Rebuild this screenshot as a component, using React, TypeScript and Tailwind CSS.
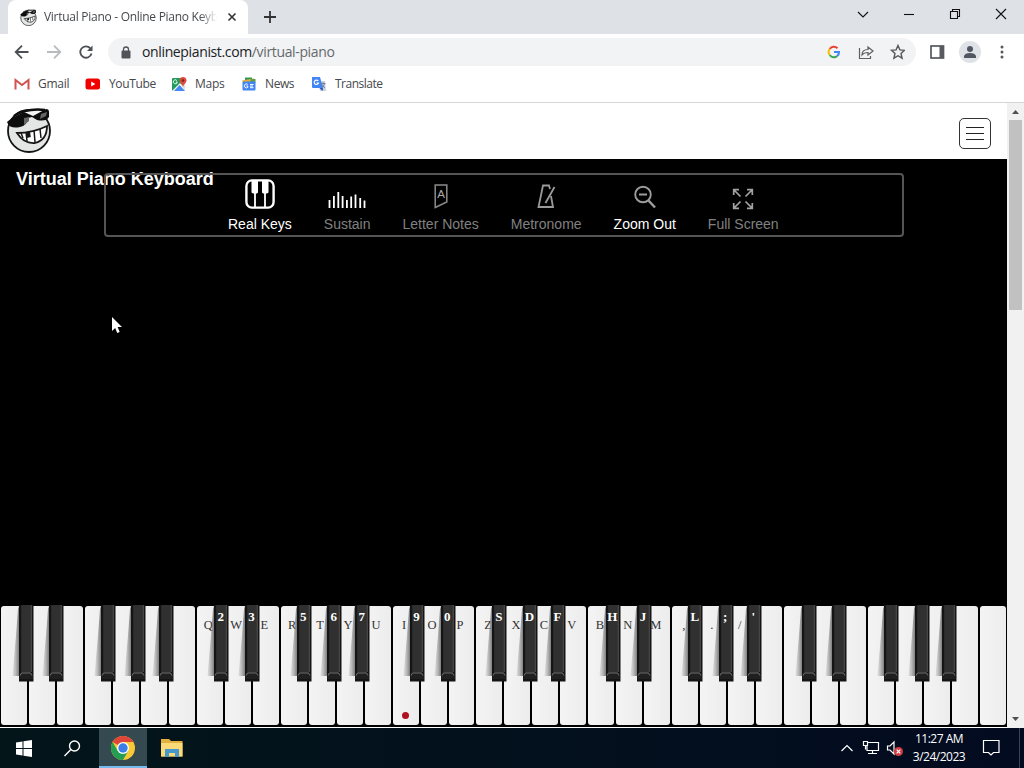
import type { ReactNode } from "react";

const bookmarks: { name: string; width: string; text: string; icon: ReactNode }[] = [
  {
    name: "Gmail",
    width: "w-[71px]",
    text: "tracking-[-0.25px]",
    icon: (
      <svg width="16" height="16" viewBox="0 0 16 16">
        <path d="M1.500 13.500V4L8 9l6.500-5v9.500" fill="none" stroke="#cf5350" strokeWidth="2" />
      </svg>
    ),
  },
  {
    name: "YouTube",
    width: "w-[86px]",
    text: "tracking-[-0.35px]",
    icon: (
      <svg width="16" height="16" viewBox="0 0 16 16">
        <rect x=".5" y="2.500" width="14.500" height="11" rx="2.500" fill="#f00000" />
        <path d="M6.200 5.500v5l4.200-2.500z" fill="#fff" />
      </svg>
    ),
  },
  {
    name: "Maps",
    width: "w-[70px]",
    text: "tracking-[-0.25px]",
    icon: (
      <svg width="16" height="16" viewBox="0 0 16 16">
        <rect x="1" y="2" width="13" height="13" rx="1" fill="#1f9b5b" />
        <path d="M1 15 9 7l5 5v3z" fill="#f4f4f4" />
        <path d="m3 15 5.500-6L14 15z" fill="#4688f4" />
        <path d="m10 9 4-3v8z" fill="#e0e0e0" />
        <path d="M5.800 4.500a2 2 0 1 0 .5 1.500H4.800" fill="none" stroke="#fff" strokeWidth=".9" />
        <path d="M12 1a3.600 3.600 0 0 1 3.500 3.500C15.500 7 13 7.500 12 11 11 7.500 8.500 7 8.500 4.500A3.600 3.600 0 0 1 12 1z" fill="#dd4b3e" />
        <circle cx="12" cy="4.500" r="1.300" fill="#7b231c" />
      </svg>
    ),
  },
  {
    name: "News",
    width: "w-[70px]",
    text: "tracking-[-0.4px]",
    icon: (
      <svg width="16" height="16" viewBox="0 0 16 16">
        <path d="M4 1.500h7v4H4z" fill="#319756" />
        <path d="m1 4.500 12-2 1 4H2z" fill="#e7ad32" />
        <path d="M10 3h4.500v4H9z" fill="#5a9b51" />
        <rect x="1.500" y="5.500" width="13" height="9" rx="1" fill="#4285f4" />
        <path d="M6.800 8.500a2 2 0 1 0 0 2.800V10H5.300M9 8.500h3.500M9 10.100h3M9 11.700h3.500" fill="none" stroke="#fff" />
      </svg>
    ),
  },
  {
    name: "Translate",
    width: "w-[80px]",
    text: "tracking-[-0.5px]",
    icon: (
      <svg width="16" height="16" viewBox="0 0 16 16">
        <path d="M7 5h7l1 10H9z" fill="#c9d1dd" />
        <path d="M1 1h8l3 11H2a1 1 0 0 1-1-1z" fill="#4285f4" />
        <path d="m8.500 12 3 3 .5-3z" fill="#2456b3" />
        <path d="M7.200 5A2.200 2.200 0 1 0 7.500 7H5.500" fill="none" stroke="#fff" strokeWidth="1.100" />
        <path d="M10 7.500h4.500M12.200 6.500v1M13.500 7.500c-.5 2-1.500 3-2.500 4M11 8.500c.5 1.500 1.500 2.500 3 3" fill="none" stroke="#667893" strokeWidth=".9" />
      </svg>
    ),
  },
];

const tools: { label: string; active: boolean; icon: ReactNode }[] = [
  {
    label: "Real Keys",
    active: true,
    icon: (
      <svg width="30" height="32" viewBox="0 0 30 32">
        <rect x="1.400" y="2.400" width="27.200" height="27.200" rx="5.500" fill="#000" stroke="#fff" strokeWidth="2.400" />
        <path d="M10 15v14M20 15v14" stroke="#fff" strokeWidth="1.800" />
        <path d="M6.500 3H13v11.500l-1 1H8l-1.500-1zM17 3h6.500v11.500l-1.500 1h-4l-1-1z" fill="#fff" />
      </svg>
    ),
  },
  {
    label: "Sustain",
    active: false,
    icon: (
      <svg width="38" height="32" viewBox="0 0 38 32">
        <path
          d="M1.500 22v8M5.900 18v12M10.300 14v16M14.600 18v12M18.900 22v8M23.200 18.500v11.500M27.500 16.500v13.500M32.200 20v10M36.500 22.500v7.500"
          stroke="#fff"
          strokeWidth="1.800"
        />
      </svg>
    ),
  },
  {
    label: "Letter Notes",
    active: false,
    icon: (
      <svg width="14" height="32" viewBox="0 0 14 32">
        <path d="M1.200 7h11.600v17L1.200 29.500z" fill="none" stroke="#8a8a8a" strokeWidth="1.500" />
        <text x="7" y="19.500" textAnchor="middle" fontSize="11.500" fill="#aaa" className="font-['Liberation_Sans',sans-serif]">
          A
        </text>
      </svg>
    ),
  },
  {
    label: "Metronome",
    active: false,
    icon: (
      <svg width="20" height="32" viewBox="0 0 20 32" fill="none" stroke="#9a9a9a" strokeWidth="1.800">
        <path d="M14 11 13 7.500H7L2.500 29h14.500l-2-11" />
        <path d="m9.500 25 9-16" />
      </svg>
    ),
  },
  {
    label: "Zoom Out",
    active: true,
    icon: (
      <svg width="22" height="32" viewBox="0 0 22 32" fill="none" stroke="#9c9c9c">
        <circle cx="9" cy="16.500" r="7.800" strokeWidth="1.900" />
        <path d="M5 16.500h8" strokeWidth="2" />
        <path d="m14.500 22.500 6.500 7" strokeWidth="2.500" />
      </svg>
    ),
  },
  {
    label: "Full Screen",
    active: false,
    icon: (
      <svg width="22" height="32" viewBox="0 0 22 32" fill="none" stroke="#a2a2a2" strokeWidth="1.700">
        <path d="M1.700 17v-5.300H7M2 12l6.500 6.500M15 11.700h5.300V17M20 12l-6.500 6.500M1.700 25v5.300H7M2 30l6.500-6.500M15 30.300h5.300V25M20 30l-6.500-6.500" />
      </svg>
    ),
  },
];

const TOTAL_KEYS = 36;
const whiteLabels = "QWERTYUIOPZXCVBNM,./";
// one entry per white key, starting from the second octave; a space means no black key
const blackLabels = "23 567 90 SDF HJ L;' ";

// black key position inside its white key, C to B
const blackOffsets = ["left-[18.5px]", "left-[21.2px]", "", "left-[17px]", "left-[19.5px]", "left-[19.5px]", ""];

function PianoKey({ index }: { index: number }) {
  const note = index % 7;
  const hasBlack = blackOffsets[note] !== "" && index !== TOTAL_KEYS - 1;
  const label = whiteLabels[index - 7];
  const blackLabel = blackLabels[index - 7];

  return (
    <div className="relative h-[120px] flex-1 px-px pt-px">
      <div className="h-full rounded-[3px] bg-linear-to-r from-[#f4f4f4] to-[#ececec] pt-[11px]">
        <span className="block w-[23px] text-center text-[12.500px] leading-[16px] text-[#333]">{label}</span>
      </div>
      {hasBlack && (
        <div className={"absolute top-0 z-10 h-[77px] w-[14.5px] " + blackOffsets[note]}>
          <svg width="22" height="77" viewBox="-7 0 22 77" className="absolute -left-[7px] top-0">
            <defs>
              <linearGradient id={"shade" + index} x1="0" x2="1">
                <stop offset="0" stopColor="#aaa" stopOpacity="0.25" />
                <stop offset="1" stopColor="#777" stopOpacity="0.95" />
              </linearGradient>
            </defs>
            <path d="M0 1v70h-6.500L-3 30-1 4z" fill={"url(#shade" + index + ")"} />
            <path d="M0 0h14.500v76.500H0z" fill="#151515" />
            <path d="M2.200 0h9.800v67.500H2.200z" fill="#303030" />
            <path d="M12.300 0v67" stroke="#626262" strokeWidth=".8" />
            <path d="M1 68.500h12l1 5.500H.5z" fill="#202020" />
            <path d="M1 70.500 2.500 68h9l1.500 2.500" fill="none" stroke="#888" strokeWidth=".8" />
          </svg>
          <span className="relative block w-[13px] pt-1 text-center text-[13px] leading-4 font-bold text-white">{blackLabel}</span>
        </div>
      )}
      {index === 14 && <div className="absolute top-[107px] left-[10px] size-[7px] rounded-full bg-[#b01020]" />}
    </div>
  );
}

function Face({ size }: { size: number }) {
  return (
    <svg width={size} height={size} viewBox="0 0 46 46">
      <circle cx="23" cy="24" r="21" fill="#e4e6e5" stroke="#161616" strokeWidth="1.800" />
      <path d="M9 9Q22-1 39 4l-7 5-14 3z" fill="#f4f4f4" />
      <path d="M1 15 6 11l12-6 9 4 13-7q3 0 3 3v5q-3 5-12 3l-5-3-4 1q-1 8-8 9-9 2-12-3z" fill="#0d0d0d" />
      <path d="M8 9Q20 1 39 3" fill="none" stroke="#0d0d0d" strokeWidth="2.500" />
      <path d="m18 11 5-1 0 4-5 4zM35 7l6-2-1 4-6 3z" fill="#666" />
      <path d="M11 26q16 0 30-7 0 14-12 17-11 1-18-10z" fill="#fff" stroke="#161616" strokeWidth="1.800" />
      <path d="m15 26 2 5M20 25l1 9M28 23l1 12M34 22l1 9" stroke="#161616" strokeWidth="1.500" />
      <path d="m20 25 4-.5.800 5.500-4 1z" fill="#161616" />
    </svg>
  );
}

function TabStrip() {
  return (
    <div className="flex h-[34px] bg-[#dee1e6] pl-2">
      <div className="flex w-[240px] items-center rounded-t-lg bg-white pl-3">
        <Face size={17} />
        <div className="ml-[7px] w-[173px] mask-r-from-90% text-[12px] tracking-[-0.28px] whitespace-nowrap text-[#45484c]">
          Virtual Piano - Online Piano Keyb
        </div>
        <svg width="10" height="10" viewBox="0 0 10 10" className="ml-[10px]">
          <path d="m1.500 1.500 7 7m0-7-7 7" stroke="#333" strokeWidth="1.600" />
        </svg>
      </div>
      <svg width="14" height="14" viewBox="0 0 14 14" className="mt-[10px] ml-[15px]">
        <path d="M7 1v12M1 7h12" stroke="#333" strokeWidth="1.800" />
      </svg>
      <svg width="160" height="14" viewBox="0 0 160 14" className="mt-[7px] mr-[10px] ml-auto" fill="none" stroke="#111" strokeWidth="1.100">
        <path d="m4 5 5 5 5-5" />
        <path d="M50 7.500h10" />
        <path d="M96.500 4.500h7v7h-7zM98.500 4.500v-2h7v7h-2" />
        <path d="m142 2 10 10m0-10-10 10" />
      </svg>
    </div>
  );
}

function Toolbar() {
  return (
    <div className="flex h-[36px] items-center bg-white pl-[14px]">
      <svg width="80" height="16" viewBox="0 0 80 16" fill="none" strokeWidth="1.800">
        <path d="M14.500 8H2M8 1.700 1.700 8 8 14.300" stroke="#4c4f53" />
        <path d="M33 8h12.500M40 1.700 46.300 8 40 14.300" stroke="#b9bbbe" />
        <path d="M76.300 4.300A5.700 5.700 0 1 0 77.500 9.500" stroke="#4c4f53" />
        <path d="M78.500 1.500V7H73z" fill="#4c4f53" />
      </svg>
      <div className="ml-[14px] flex h-[28px] w-[808px] items-center rounded-full bg-[#f1f3f4] pl-[13px]">
        <svg width="10" height="13" viewBox="0 0 10 13">
          <rect x=".5" y="4.500" width="9" height="8" rx="1" fill="#505357" />
          <path d="M2.500 5V3.500a2.500 2.500 0 0 1 5 0V5" fill="none" stroke="#505357" strokeWidth="1.300" />
        </svg>
        <div className="ml-[11px] pb-px text-[14px] tracking-[-0.36px] whitespace-nowrap text-[#66696d]">
          <span className="text-[#202124]">onlinepianist.com</span>/virtual-piano
        </div>
        <svg width="78" height="16" viewBox="0 0 78 16" className="mr-[11px] ml-auto" fill="none">
          <path d="M10.500 4.300A5 5 0 0 0 2.700 5" stroke="#ea4335" strokeWidth="2" />
          <path d="M2.700 5a5 5 0 0 0 0 6" stroke="#fbbc05" strokeWidth="2" />
          <path d="M2.700 11a5 5 0 0 0 7.500 1" stroke="#34a853" strokeWidth="2" />
          <path d="M10.200 12A5 5 0 0 0 12 8H7" stroke="#4285f4" strokeWidth="2" />
          <path d="M32.500 4v10.500h11V12M35 11c0-4 2.500-5.500 6-5.500V3l5 4-5 4V8.500c-3 0-4.500.5-6 2.500z" stroke="#5c5f63" strokeWidth="1.200" />
          <path d="m71 1.500 1.900 4.400 4.600.4-3.500 3.200 1.100 4.700L71 11.700l-4.100 2.500L68 9.500l-3.500-3.200 4.600-.4z" stroke="#56595d" strokeWidth="1.400" />
        </svg>
      </div>
      <svg width="15" height="14" viewBox="0 0 15 14" className="ml-[14px]">
        <rect x="1" y="1" width="12.500" height="12" fill="none" stroke="#56595d" strokeWidth="1.700" />
        <path d="M9.500 1h4v12h-4z" fill="#56595d" />
      </svg>
      <svg width="22" height="22" viewBox="0 0 22 22" className="ml-[14px]">
        <circle cx="11" cy="11" r="11" fill="#dfe2e7" />
        <circle cx="11" cy="8" r="3" fill="#505760" />
        <path d="M5 17v-2q1-3 6-3t6 3v2z" fill="#505760" />
      </svg>
      <svg width="4" height="14" viewBox="0 0 4 14" className="ml-[19px]" fill="#56595d">
        <circle cx="2" cy="2" r="1.500" />
        <circle cx="2" cy="7" r="1.500" />
        <circle cx="2" cy="12" r="1.500" />
      </svg>
    </div>
  );
}

function Taskbar() {
  return (
    <div className="flex h-[40px] bg-linear-to-r from-[#031519] to-[#030b20] text-white">
      <div className="flex w-[49px] items-center justify-center">
        <svg width="17" height="17" viewBox="0 0 17 17" fill="#fff" className="mr-px">
          <path d="M0 2.500 6.500 1.500v6.500H0zM7.500 1.300 16 0v8H7.500zM0 9h6.500v6.500l-6.500-1zM7.500 9H16v8l-8.500-1.300z" />
        </svg>
      </div>
      <div className="flex w-[50px] items-center justify-center pr-1">
        <svg width="17" height="17" viewBox="0 0 17 17" fill="none" stroke="#fff" strokeWidth="1.400">
          <circle cx="10.500" cy="6" r="5" />
          <path d="M6.900 9.600.500 16" />
        </svg>
      </div>
      <div className="flex w-12 items-center justify-center border-b-2 border-[#76b9ed] bg-[#344950] pt-0.5">
        <svg width="24" height="24" viewBox="0 0 24 24">
          <circle cx="12" cy="12" r="12" fill="#f8c934" />
          <path d="M12 12 1.600 6A12 12 0 0 1 22.400 6H12z" fill="#df4639" />
          <path d="M1.600 6A12 12 0 0 0 12 24l5.200-9L12 12 6.800 15z" fill="#249f51" />
          <circle cx="12" cy="12" r="6" fill="#fff" />
          <circle cx="12" cy="12" r="4.700" fill="#3c7ee8" />
        </svg>
      </div>
      <div className="flex w-[50px] items-center justify-center">
        <svg width="22" height="18" viewBox="0 0 22 18">
          <path d="M0 0h8l2 2h11.500v15.500H0z" fill="#e2b03e" />
          <path d="M0 4h21.500v13.500H0z" fill="#f9d978" />
          <path d="M4 18v-8h14v8h-4v-4H8v4z" fill="#4598c9" />
        </svg>
      </div>
      <svg width="64" height="18" viewBox="0 0 64 18" className="mt-[11px] ml-auto" fill="none" stroke="#fff" strokeWidth="1.200">
        <path d="m1.500 12 5.500-5.500 5.500 5.500" />
        <path d="M28 3.500h10.500v8H27V7M32.500 11.500v3M28 14.500h9M23.500 2.500h4v4h-4zM25.500 6.500v4" />
        <path d="M47.500 7H50l4-4v12l-4-4h-2.500z" />
        <circle cx="58.500" cy="12.500" r="4.500" fill="#d33b43" stroke="none" />
        <path d="m56.700 10.700 3.600 3.600m0-3.600-3.600 3.600" />
      </svg>
      <div className="ml-[6px] w-[58px] pt-[2px] text-center text-[12px] leading-[18px] tracking-[-0.5px] whitespace-nowrap">
        <div>11:27 AM</div>
        <div>3/24/2023</div>
      </div>
      <svg width="18" height="18" viewBox="0 0 18 18" className="mt-[11px] mr-[19px] ml-[14px]" fill="none" stroke="#fff" strokeWidth="1.200">
        <path d="M1.500 1.500H17v12h-5.500L9 16l-2.500-2.500h-5z" />
      </svg>
      <div className="w-[5px] border-l border-[#394350]" />
    </div>
  );
}

export default function App() {
  return (
    <div className="relative flex h-[768px] w-[1024px] flex-col overflow-hidden bg-white font-['Open_Sans','Noto_Sans',sans-serif]">
      <TabStrip />
      <Toolbar />
      <div className="flex h-[33px] items-center border-b border-[#d3d6d9] pb-[5px] pl-[14px]">
        {bookmarks.map((b) => (
          <div key={b.name} className={"flex shrink-0 items-center gap-2 text-[12px] text-[#45484c] " + b.width}>
            {b.icon}
            <span className={b.text}>{b.name}</span>
          </div>
        ))}
      </div>

      <div className="flex h-[625px]">
        <main className="w-[1007px] bg-white font-['Liberation_Sans',Arial,sans-serif]">
          <header className="flex h-14 justify-between pt-1 pr-4 pl-[6px]">
            <Face size={46} />
            <div className="mt-[11px] flex h-[31px] w-8 flex-col justify-center gap-[5px] rounded-[5px] border-[1.500px] border-[#333] px-[6px]">
              <div className="h-px bg-[#222]" />
              <div className="h-px bg-[#222]" />
              <div className="h-px bg-[#222]" />
            </div>
          </header>

          <section className="flex h-[568px] flex-col bg-black">
            <h1 className="h-[14px] pt-[9px] pl-4 text-[18px] leading-[22px] font-bold text-white">Virtual Piano Keyboard</h1>
            <div className="z-10 ml-[104px] flex h-16 w-[800px] gap-8 rounded-[4px] border-2 border-[#555] pl-[122px]">
              {tools.map((t) => (
                <div
                  key={t.label}
                  className={"flex flex-col items-center pt-[3px] text-[14px] leading-[18px] whitespace-nowrap " + (t.active ? "text-white" : "text-[#808080]")}
                >
                  {t.icon}
                  <span className="mt-[5px]">{t.label}</span>
                </div>
              ))}
            </div>
            <div className="mt-auto flex pb-[2px] font-['Liberation_Serif',serif]">
              {Array.from({ length: TOTAL_KEYS }, (_, i) => (
                <PianoKey key={i} index={i} />
              ))}
            </div>
          </section>
        </main>

        {/* scrollbar */}
        <div className="flex w-[17px] flex-col items-center bg-[#f1f1f1]">
          <svg width="17" height="17" viewBox="0 0 17 17">
            <path d="m5 11 3.500-4 3.500 4z" fill="#505050" />
          </svg>
          <div className="h-[190px] w-[13px] bg-[#c1c1c1]" />
          <svg width="17" height="17" viewBox="0 0 17 17" className="mt-auto">
            <path d="m5 6 3.500 4L12 6z" fill="#505050" />
          </svg>
        </div>
      </div>

      <Taskbar />

      {/* mouse pointer */}
      <svg width="12" height="19" viewBox="0 0 12 19" className="absolute top-[316px] left-[111px]">
        <path d="M1 1v14l3.200-3 2 5 2.500-1-2.100-5H11z" fill="#fff" />
      </svg>
    </div>
  );
}
